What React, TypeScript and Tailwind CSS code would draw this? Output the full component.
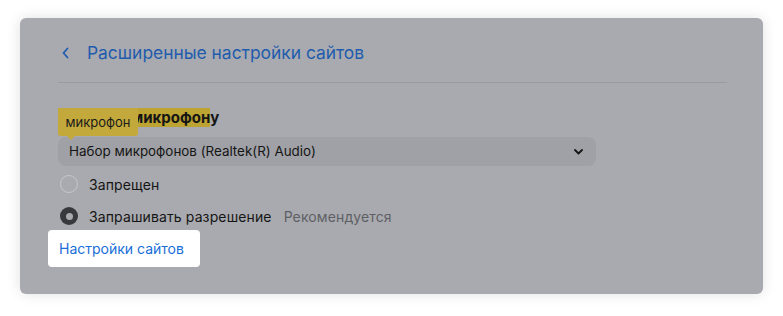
import React from "react";

export default function App() {
  return (
    <div className="w-[783px] h-[316px] bg-white pt-[18px] pl-[20px]" style={{ fontFamily: "Inter, 'Noto Sans', sans-serif" }}>
      <div className="w-[743px] h-[276px] rounded-[6px] bg-[#a9aaaf] shadow-[0_0_14px_rgba(0,0,0,0.12)] px-[38px] pr-[36px]">
        {/* Header */}
        <div className="h-[65px] flex items-center pt-[6px] border-b border-[#9a9ba0]">
          <svg width="10" height="12" viewBox="0 0 10 12" className="ml-[3px]">
            <path d="M6.5 1.5 L2.5 6 L6.5 10.5" fill="none" stroke="#1f5cad" strokeWidth="1.8" strokeLinecap="round" strokeLinejoin="round" />
          </svg>
          <span className="ml-[16px] text-[17.4px] text-[#1f5cad]">Расширенные настройки сайтов</span>
        </div>

        {/* Section */}
        <div className="pt-[25px]">
          <div className="relative h-[20px] flex items-center">
            <span className="text-[15px] font-bold text-[#151515] leading-[20px]">
              <span className="bg-[#bca332]">Доступ к микрофон</span>у
            </span>
            <div className="absolute left-0 top-0 h-[28px] w-[80px] bg-[#c3a93c] rounded-[3px] flex items-center justify-center pt-[2px] text-[13px] text-[#1a1a1a]">
              микрофон
              <div className="absolute left-[8px] -bottom-[4px] w-0 h-0 border-l-[5px] border-r-[5px] border-t-[5px] border-l-transparent border-r-transparent border-t-[#c3a93c]" />
            </div>
          </div>

          <div className="mt-[9px] w-[538px] h-[29px] rounded-[8px] bg-[#a0a1a6] flex items-center justify-between pl-[11px] pr-[13px]">
            <span className="text-[13.4px] text-[#151515]">Набор микрофонов (Realtek(R) Audio)</span>
            <svg width="9" height="6" viewBox="0 0 9 6">
              <path d="M1 1 L4.5 4.5 L8 1" fill="none" stroke="#151515" strokeWidth="1.8" strokeLinecap="round" strokeLinejoin="round" />
            </svg>
          </div>

          <div className="mt-[8px] h-[20px] flex items-center">
            <div className="ml-[2px] w-[18px] h-[18px] rounded-full border border-[#c6c7cb]" />
            <span className="ml-[11px] text-[14px] tracking-[0.12px] text-[#151515]">Запрещен</span>
          </div>

          <div className="mt-[12px] h-[20px] flex items-center">
            <div className="ml-[2px] w-[18px] h-[18px] rounded-full bg-[#38393d] flex items-center justify-center">
              <div className="w-[7px] h-[7px] rounded-full bg-[#a9aaaf]" />
            </div>
            <span className="ml-[11px] text-[14px] tracking-[0.12px] text-[#151515]">Запрашивать разрешение</span>
            <span className="ml-[12px] text-[14px] tracking-[0.12px] text-[#5e5f64]">Рекомендуется</span>
          </div>

          <div className="mt-[4px] -ml-[10px] w-[152px] h-[37px] bg-white rounded-[4px] flex items-center pl-[11px]">
            <span className="text-[14px] text-[#1a6ed8]">Настройки сайтов</span>
          </div>
        </div>
      </div>
    </div>
  );
}
